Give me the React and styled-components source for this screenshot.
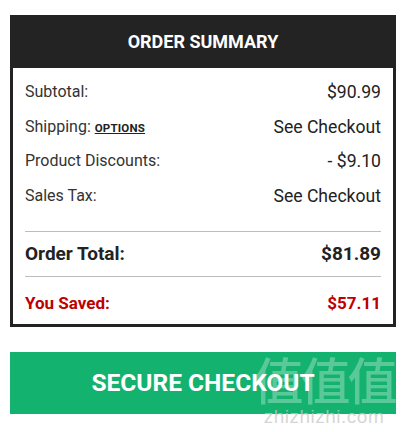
import React from "react";
import styled, { createGlobalStyle } from "styled-components";

const Global = createGlobalStyle`
  html, body { margin: 0; padding: 0; background: #fff; }
  body { font-family: Roboto, "Noto Sans", Arial, sans-serif; }
`;

const Page = styled.div`
  width: 403px;
  height: 432px;
  padding: 15px 7px 0 10px;
  box-sizing: border-box;
  position: relative;
`;

const Panel = styled.section`
  border: 3px solid #232323;
  border-top: 0;
  width: 386px;
  box-sizing: border-box;
`;

const Header = styled.h2`
  margin: 0 -3px;
  height: 53px;
  background: #232323;
  color: #fff;
  font-size: 18px;
  font-weight: 700;
  display: flex;
  align-items: center;
  justify-content: center;
`;

const Body = styled.div`
  padding: 14px 12px 0 12px;
`;

const Row = styled.div`
  display: flex;
  justify-content: space-between;
  align-items: baseline;
  height: ${(p) => p.$h || 34.5}px;
  color: #222;
`;

const Label = styled.span`
  font-size: 16px;
  color: #333;
  position: relative;
  top: -1px;
`;

const Value = styled.span`
  font-size: 17.6px;
  color: #222;
`;

const Options = styled.a`
  font-size: 11.5px;
  font-weight: 700;
  text-decoration: underline;
  color: #222;
  letter-spacing: 0.2px;
`;

const Divider = styled.hr`
  border: 0;
  border-top: 1px solid #bdbdbd;
  margin: 0;
`;

const TotalRow = styled.div`
  display: flex;
  justify-content: space-between;
  align-items: center;
  height: 44px;
  font-size: 19px;
  font-weight: 700;
  color: #222;
`;

const SavedRow = styled.div`
  display: flex;
  justify-content: space-between;
  align-items: flex-start;
  height: 47px;
  box-sizing: border-box;
  padding-top: 16px;
  line-height: 20px;
  font-size: 17px;
  font-weight: 700;
  color: #bd0000;
`;

const Button = styled.button`
  margin-top: 25px;
  width: 386px;
  height: 62px;
  border: 0;
  background: #13b26f;
  color: #fff;
  font-family: Roboto, Arial, sans-serif;
  font-size: 24.5px;
  font-weight: 700;
  display: flex;
  align-items: center;
  justify-content: center;
  cursor: pointer;
  padding: 0;
`;

const Watermark = styled.div`
  position: absolute;
  left: 253px;
  top: 349px;
  width: 142px;
  display: flex;
  flex-direction: column;
  align-items: center;
  pointer-events: none;
`;

const WmHan = styled.div`
  font-family: "Noto Sans CJK SC", sans-serif;
  font-size: 50px;
  font-weight: 500;
  line-height: 58px;
  color: rgba(255, 255, 255, 0.3);
  letter-spacing: -3px;
`;

const WmUrl = styled.div`
  font-family: "Liberation Sans", Arial, sans-serif;
  font-size: 19px;
  line-height: 20px;
  color: rgba(200, 200, 200, 0.75);
  letter-spacing: 0.5px;
`;

export default function App() {
  return (
    <Page>
      <Global />
      <Panel>
        <Header>ORDER SUMMARY</Header>
        <Body>
          <Row>
            <Label>Subtotal:</Label>
            <Value>$90.99</Value>
          </Row>
          <Row>
            <Label>
              Shipping: <Options>OPTIONS</Options>
            </Label>
            <Value>See Checkout</Value>
          </Row>
          <Row>
            <Label>Product Discounts:</Label>
            <Value>- $9.10</Value>
          </Row>
          <Row $h={45}>
            <Label>Sales Tax:</Label>
            <Value>See Checkout</Value>
          </Row>
          <Divider />
          <TotalRow>
            <span>Order Total:</span>
            <span>$81.89</span>
          </TotalRow>
          <Divider />
          <SavedRow>
            <span>You Saved:</span>
            <span>$57.11</span>
          </SavedRow>
        </Body>
      </Panel>
      <Button>SECURE CHECKOUT</Button>
      <Watermark>
        <WmHan>值值值</WmHan>
        <WmUrl>zhizhizhi.com</WmUrl>
      </Watermark>
    </Page>
  );
}
